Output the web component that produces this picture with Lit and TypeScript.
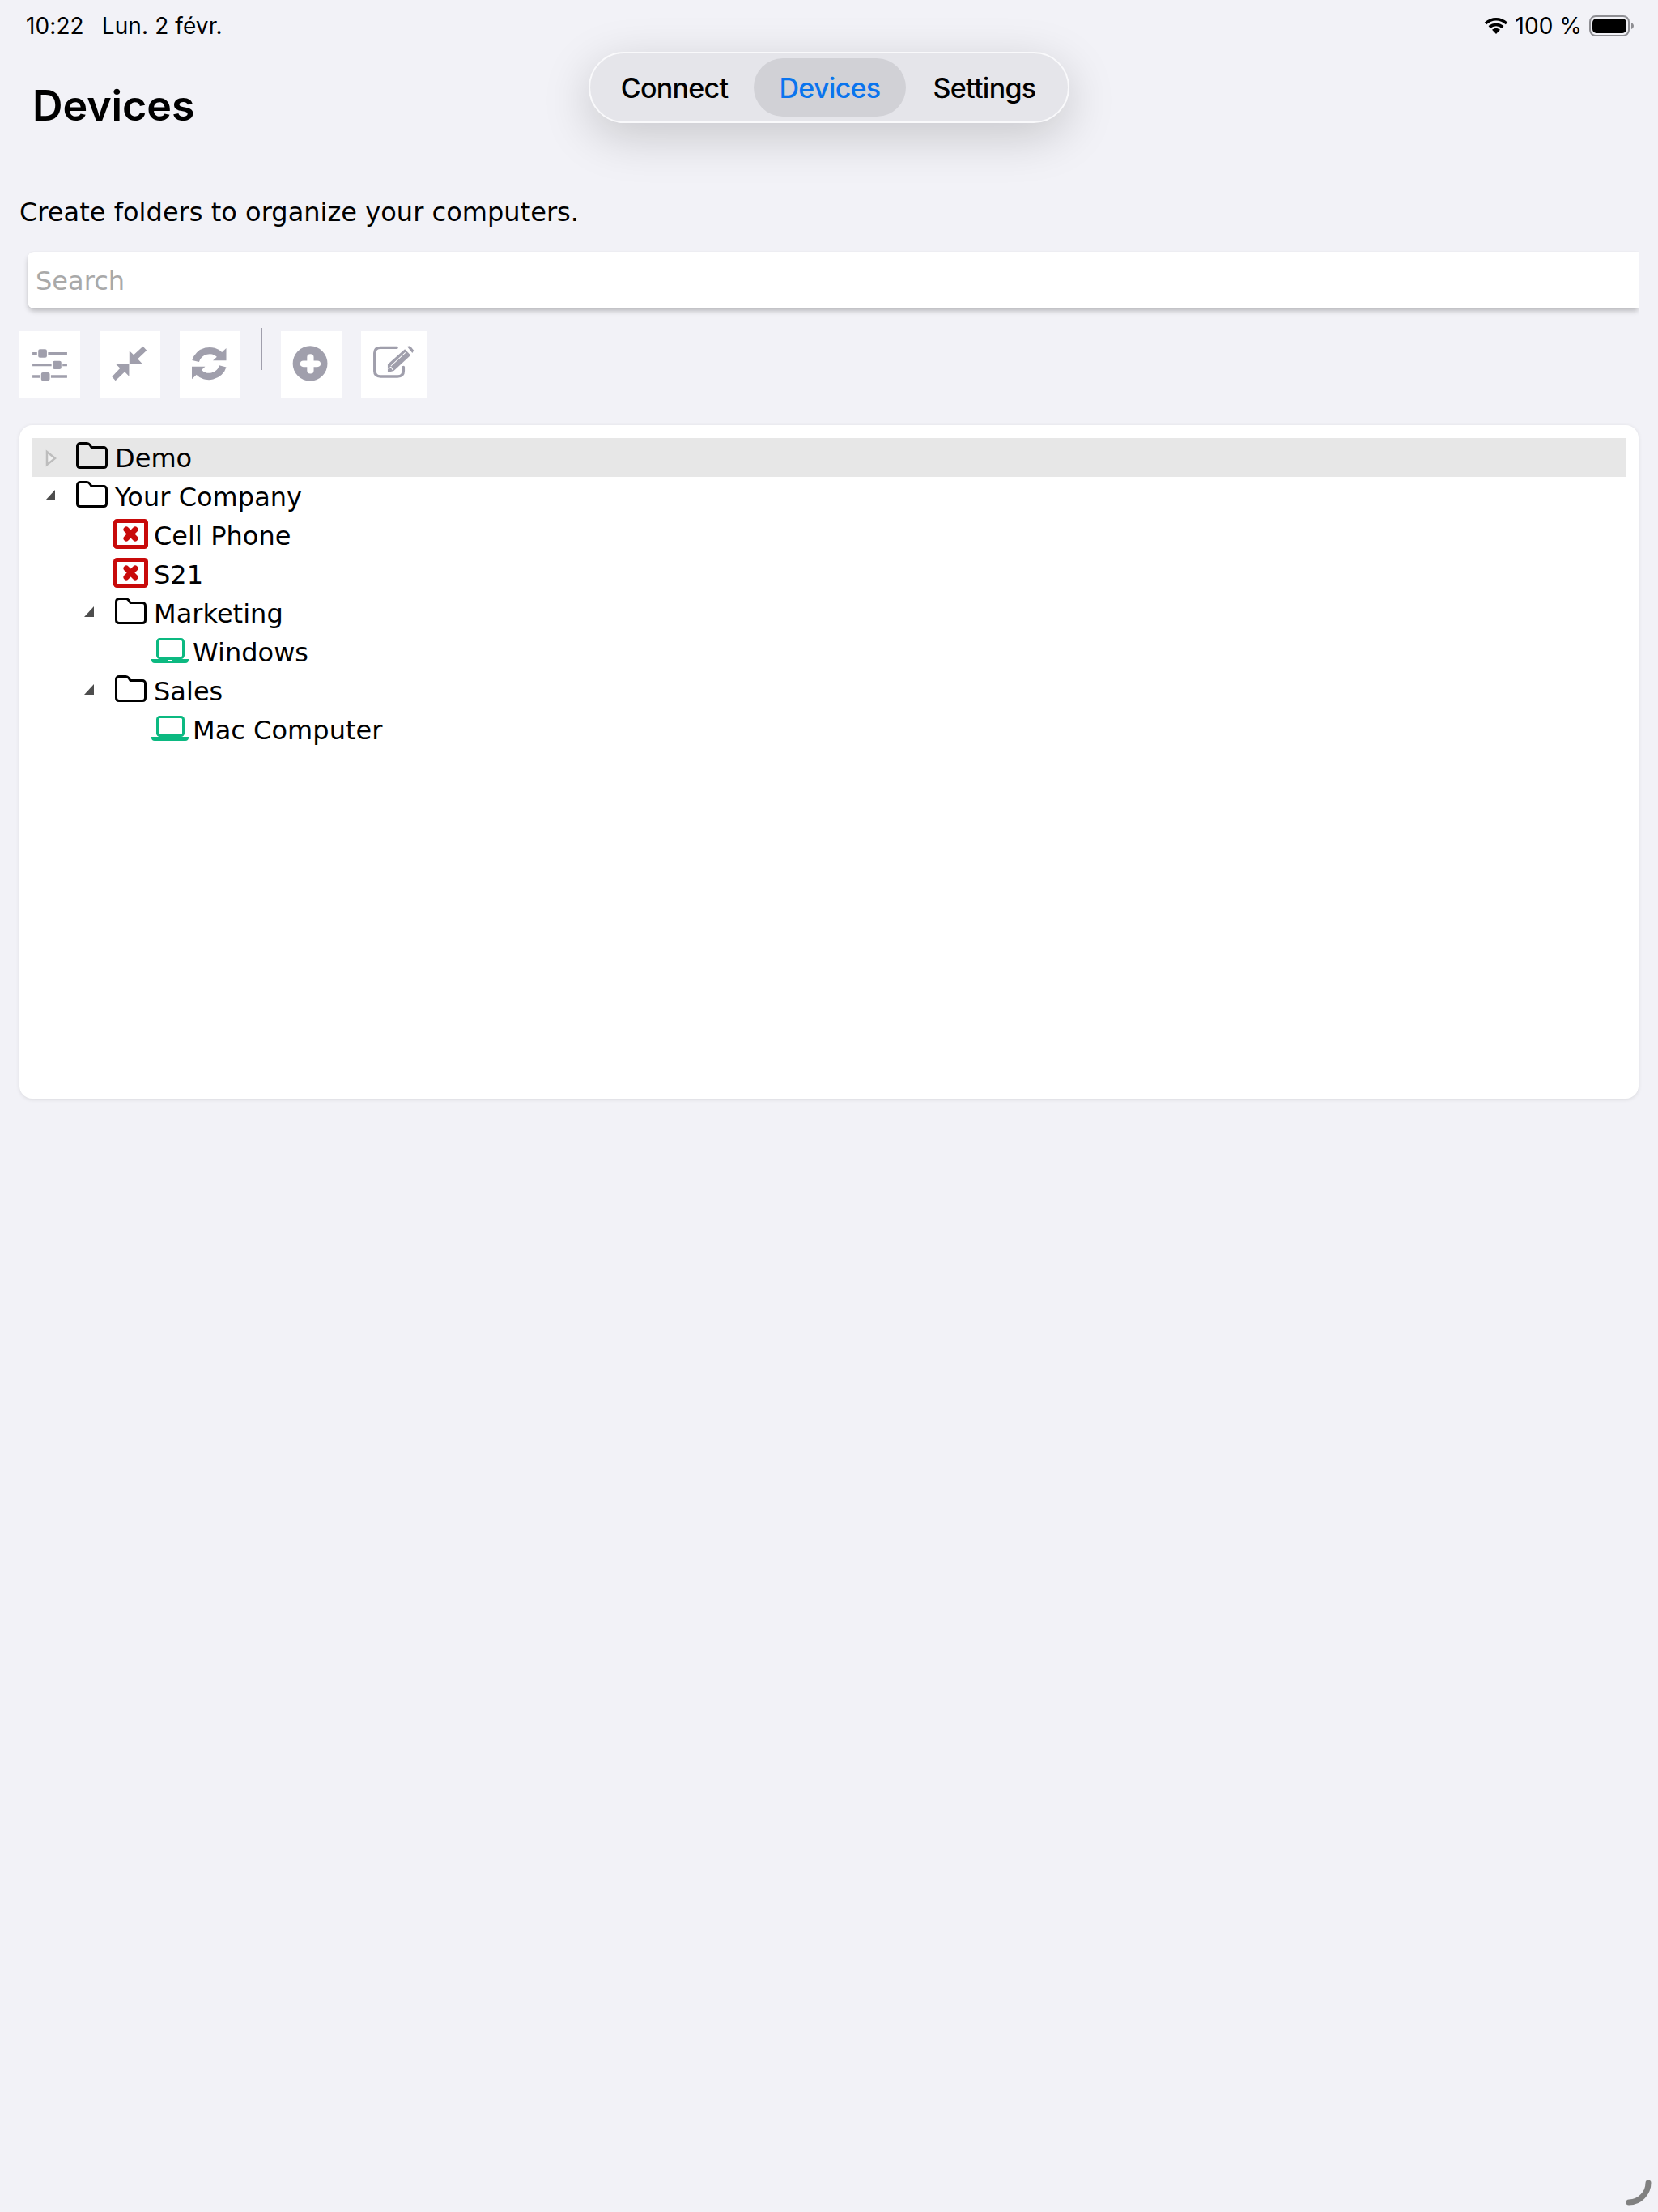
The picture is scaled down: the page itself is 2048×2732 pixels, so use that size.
import { LitElement, html, css, svg } from "lit";
import { customElement } from "lit/decorators.js";

const folder = svg`<svg class="ic" width="39" height="33" viewBox="0 0 39 33"><path d="M5 1.500H13.500C15 1.500 16 2.200 17 3.500L19 6.500H34C36 6.500 37.500 8 37.500 10V28C37.500 30.200 36 31.500 34 31.500H5C3 31.500 1.500 30.200 1.500 28V5C1.500 3 3 1.500 5 1.500Z" fill="none" stroke="#000" stroke-width="3" stroke-linejoin="round"/></svg>`;
const err = svg`<svg class="ic low" width="43" height="37" viewBox="0 0 43 37"><rect x="2.500" y="2.500" width="38" height="32" rx="2" fill="#fff" stroke="#c80a0a" stroke-width="5"/><path d="M16 13L27 24M27 13L16 24" stroke="#c80a0a" stroke-width="7" stroke-linecap="round"/></svg>`;
const laptop = svg`<svg class="ic low" width="46" height="31" viewBox="0 0 46 31"><rect x="7.500" y="1.500" width="32" height="23" rx="3" fill="none" stroke="#0cb981" stroke-width="3"/><path d="M0 26H46V27C46 29.500 44.500 31 42 31H4C1.500 31 0 29.500 0 27Z" fill="#0cb981"/><rect x="21" y="27" width="4" height="1" fill="#fff"/></svg>`;

const rows = [
  { l: 0, t: "Demo", i: "f", a: "r", sel: true },
  { l: 0, t: "Your Company", i: "f", a: "d" },
  { l: 1, t: "Cell Phone", i: "e" },
  { l: 1, t: "S21", i: "e" },
  { l: 1, t: "Marketing", i: "f", a: "d" },
  { l: 2, t: "Windows", i: "l" },
  { l: 1, t: "Sales", i: "f", a: "d" },
  { l: 2, t: "Mac Computer", i: "l" },
];

@customElement("app-root")
export class AppRoot extends LitElement {
  static styles = css`
    :host { display: block; position: relative; width: 2048px; height: 2732px; background: #f2f2f7; overflow: hidden; color: #000; font-family: "DejaVu Sans", sans-serif; letter-spacing: 0.03px; }
    .status { display: flex; align-items: center; height: 32px; padding: 16px 0 0 32px; font-family: Inter, sans-serif; font-size: 28px; letter-spacing: 0.1px; }
    .status .date { margin-left: 22px; }
    .status .right { margin-left: auto; display: flex; align-items: center; margin-right: 30px; }
    .wifi { margin-right: 8px; }
    .batt { margin-left: 9px; }
    h1 { margin: 0; padding: 47px 0 0 40px; height: 83px; font: 600 52px/72px Inter, sans-serif; letter-spacing: -0.1px; }
    .desc { padding: 62px 0 0 24px; height: 44px; font-size: 32px; line-height: 44px; }
    .searchwrap { margin: 0 24px 0 0; padding: 27px 0 12px 34px; overflow: hidden; }
    .search { height: 70px; background: #fff; border-radius: 8px 0 0 8px; box-shadow: 0 4px 6px -1px rgba(0,0,0,.24), 0 0 2px rgba(0,0,0,.06); padding-left: 10px; font-size: 32px; line-height: 72px; color: #a9a9a9; }
    .tools { display: flex; align-items: flex-start; padding: 16px 0 0 24px; }
    .btn { width: 75px; height: 82px; background: #fff; margin-right: 24px; display: block; flex: none; }
    .btn.wide { width: 82px; margin-right: 0; }
    .btn.nr { margin-right: 25px; }
    .sep { width: 2px; height: 52px; margin: -4px 23px 0 0; background: #a09fac; flex: none; }
    .panel { margin: 34px 24px 0 24px; height: 832px; box-sizing: border-box; padding: 16px; background: #fff; border-radius: 16px; box-shadow: 0 1px 5px rgba(0,0,0,.1); }
    .row { display: flex; align-items: center; height: 48px; font-size: 32px; white-space: nowrap; }
    .row.sel { background: #e7e7e7; }
    .tog { width: 48px; height: 48px; flex: none; }
    .slot { width: 51px; height: 48px; flex: none; display: flex; align-items: center; justify-content: center; }
    .ic { display: block; margin-top: -6px; }
    .ic.low { margin-top: -3px; }
    .lbl { line-height: 48px; padding: 2px 0 0 3px; }
    .pill { position: absolute; left: 727px; top: 64px; box-sizing: border-box; width: 594px; height: 88px; border: 2px solid #f9f9fb; border-radius: 44px; background: #e5e5ea; box-shadow: 0 16px 60px rgba(0,0,0,.18); display: flex; align-items: center; padding-left: 6px; font: 500 34px Inter, sans-serif; letter-spacing: -0.7px; }
    .seg { height: 72px; border-radius: 36px; display: flex; align-items: center; justify-content: center; flex: none; }
    .seg.a { width: 196px; } .seg.b { width: 188px; background: #d1d1d6; color: #0a74ee; } .seg.c { width: 194px; }
    .spin { position: absolute; right: 4px; bottom: 4px; }
  `;

  private arrow(a?: string) {
    return html`<svg class="tog" viewBox="0 0 48 48">${a === "r"
      ? svg`<path d="M18 17L28 25L18 33Z" fill="#f0f0f0" stroke="#bdbdbd" stroke-width="2.500"/>`
      : a === "d" ? svg`<path d="M16 29H28V16Z" fill="#4d4d4d"/>` : null}</svg>`;
  }

  private icon(i: string) {
    return i === "f" ? folder : i === "e" ? err : laptop;
  }

  render() {
    const C = "#a09fac";
    return html`
      <div class="status"><span>10:22</span><span class="date">Lun. 2 févr.</span>
        <div class="right">
          <svg class="wifi" width="30" height="22" viewBox="0 0 30 22"><path d="M2 8C9.500 1 20.500 1 28 8M6.700 12.500C11.500 8.500 18.500 8.500 23.300 12.500" fill="none" stroke="#000" stroke-width="3.600"/><path d="M10 15.800C13 13.500 17 13.500 20 15.800L15 21Z" fill="#000"/></svg>
          <span>100 %</span>
          <svg class="batt" width="55" height="26" viewBox="0 0 55 26"><rect x="1" y="1" width="48" height="24" rx="7" fill="none" stroke="#8e8e93" stroke-width="2"/><rect x="4" y="4" width="42" height="18" rx="5" fill="#000"/><path d="M52 9C54 10 55 11.500 55 13S54 16 52 17Z" fill="#8e8e93"/></svg>
        </div>
      </div>
      <h1>Devices</h1>
      <div class="desc">Create folders to organize your computers.</div>
      <div class="searchwrap"><div class="search">Search</div></div>
      <div class="tools">
        <svg class="btn" preserveAspectRatio="none" viewBox="67 357 210 246"><path d="M112 440H232M112 482H232M112 525H232" stroke="${C}" stroke-width="10"/><g fill="${C}" stroke="#fff" stroke-width="4"><rect x="130" y="422" width="34" height="35" rx="8"/><rect x="180" y="465" width="34" height="35" rx="8"/><rect x="140" y="508" width="34" height="35" rx="8"/></g></svg>
        <svg class="btn" preserveAspectRatio="none" viewBox="344 357 210 246"><g fill="${C}"><path d="M447 430L462 445L494 413L507 428L476 460L491 477H447Z"/><path d="M446 478H399L415 494L387 526L399 541L431 508L446 524Z"/></g></svg>
        <svg class="btn nr" preserveAspectRatio="none" viewBox="622 357 210 246"><g fill="none" stroke="${C}" stroke-width="25"><path d="M677 468A50 52 0 0 1 762 446"/><path d="M771 487A50 52 0 0 1 686 508"/></g><path d="M783 420V466H737Z" fill="${C}"/><path d="M664 535V488H710Z" fill="${C}"/></svg>
        <div class="sep"></div>
        <svg class="btn" preserveAspectRatio="none" viewBox="972 357 210 246"><ellipse cx="1073" cy="477" rx="60" ry="65" fill="${C}"/><path d="M1050 478H1098M1074 453V503" stroke="#fff" stroke-width="23" stroke-linecap="round"/></svg>
        <svg class="btn wide" preserveAspectRatio="none" viewBox="1249 357 229 246"><path d="M1372 418H1316Q1296 418 1296 438V505Q1296 525 1316 525H1375Q1395 525 1395 505V490" fill="none" stroke="${C}" stroke-width="10" stroke-linecap="round"/><path d="M1341 480L1400 424L1420 446L1362 504L1341 510Z" fill="${C}"/><path d="M1408 414L1418 412L1431 428L1426 438Z" fill="${C}"/><path d="M1352 486L1402 436M1343 497L1352 490L1358 500" stroke="#fff" stroke-width="3" fill="none"/></svg>
      </div>
      <div class="panel">
        ${rows.map(r => html`<div class="row ${r.sel ? "sel" : ""}">
          <span style="width:${r.l * 48}px;flex:none"></span>
          ${this.arrow(r.a)}
          <div class="slot">${this.icon(r.i)}</div>
          <span class="lbl">${r.t}</span>
        </div>`)}
      </div>
      <div class="pill">
        <div class="seg a">Connect</div>
        <div class="seg b">Devices</div>
        <div class="seg c">Settings</div>
      </div>
      <svg class="spin" width="40" height="40" viewBox="0 0 40 40"><path d="M32 8C32 20 22 32 8 32" fill="none" stroke="#808080" stroke-width="7" stroke-linecap="round"/></svg>
    `;
  }
}
